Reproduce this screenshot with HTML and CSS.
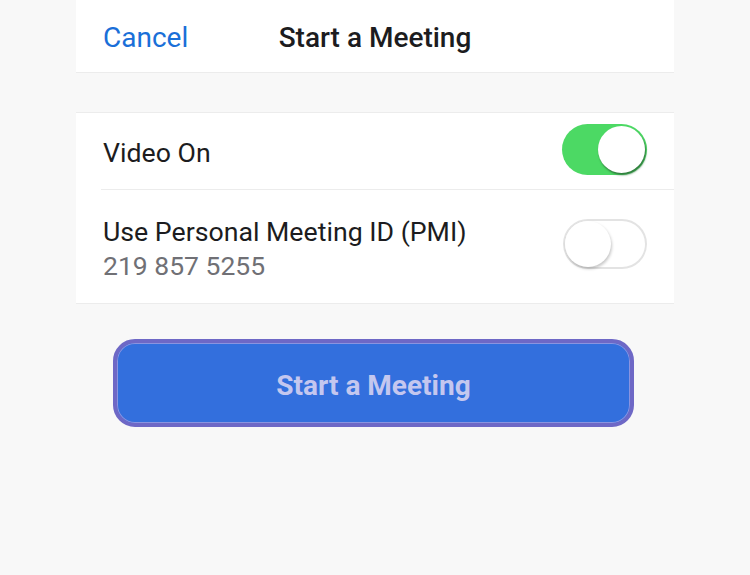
FILE: index.html
```html
<!DOCTYPE html>
<html>
<head>
<meta charset="utf-8">
<link rel="stylesheet" href="styles.css">
</head>
<body>
<div class="screen">
  <header class="header">
    <span class="cancel">Cancel</span>
    <span class="title">Start a Meeting</span>
    <span></span>
  </header>
  <section class="settings">
    <div class="row row-video">
      <span class="label">Video On</span>
      <span class="toggle on"><span class="knob"></span></span>
    </div>
    <div class="row row-pmi">
      <div class="text">
        <div class="label">Use Personal Meeting ID (PMI)</div>
        <div class="sub">219 857 5255</div>
      </div>
      <span class="toggle off"><span class="knob"></span></span>
    </div>
  </section>
  <div class="actions">
    <button class="start">Start a Meeting</button>
  </div>
</div>
</body>
</html>
```
FILE: styles.css
```css
html, body {
  margin: 0;
  padding: 0;
  background: #f8f8f8;
  font-family: Roboto, "Liberation Sans", sans-serif;
}
.screen {
  width: 598px;
  margin-left: 76px;
}
.header {
  height: 72px;
  background: #fff;
  border-bottom: 1px solid #ececec;
  display: grid;
  grid-template-columns: 1fr auto 1fr;
  align-items: center;
  padding: 0 27px;
}
.cancel {
  color: #1a6fd8;
  font-size: 28px;
  padding-top: 2px;
}
.title {
  color: #1c1c20;
  font-size: 28px;
  font-weight: 500;
  padding-top: 2px;
}
.settings {
  margin-top: 39px;
  background: #fff;
  border-top: 1px solid #ececec;
  border-bottom: 1px solid #ececec;
}
.row {
  display: flex;
  align-items: center;
  justify-content: space-between;
  padding: 0 27px;
}
.row-video {
  height: 77px;
  position: relative;
}
.row-video::after {
  content: "";
  position: absolute;
  left: 25px;
  right: 0;
  bottom: 0;
  height: 1px;
  background: #ececec;
}
.row-video .label {
  padding-top: 3px;
}
.row-pmi {
  height: 113px;
}
.label {
  color: #1c1c20;
  font-size: 26.7px;
  line-height: 34px;
}
.sub {
  color: #707075;
  font-size: 26.5px;
  line-height: 34px;
}
.row-pmi .text {
  padding-top: 4px;
}
.toggle {
  position: relative;
  width: 85px;
  height: 51px;
  border-radius: 26px;
  box-sizing: border-box;
}
.toggle.on {
  background: #4cd964;
  margin-top: -4px;
}
.toggle.off {
  background: #fff;
  border: 2px solid #e3e3e3;
  width: 84px;
  height: 50px;
  margin-top: -5px;
}
.knob {
  position: absolute;
  width: 47px;
  height: 47px;
  border-radius: 50%;
  background: #fff;
}
.toggle.on .knob {
  right: 2px;
  top: 2px;
  box-shadow: 1px 2px 2px #2f7a3c;
}
.toggle.off .knob {
  left: 0px;
  top: 0px;
  width: 46px;
  height: 46px;
  box-shadow: 1px 2px 3px rgba(0,0,0,0.22);
}
.actions {
  margin-top: 35px;
  padding-left: 37px;
}
.start {
  width: 521px;
  height: 88px;
  box-sizing: border-box;
  border: 4px solid #6e68c6;
  border-radius: 22px;
  background: #336fdd;
  box-shadow: inset 0 0 0 1px #8a94e0;
  color: #c4c7ef;
  font-family: Roboto, "Liberation Sans", sans-serif;
  font-size: 28px;
  font-weight: 700;
  padding: 4px 0 0 0;
  margin: 0;
}
```
